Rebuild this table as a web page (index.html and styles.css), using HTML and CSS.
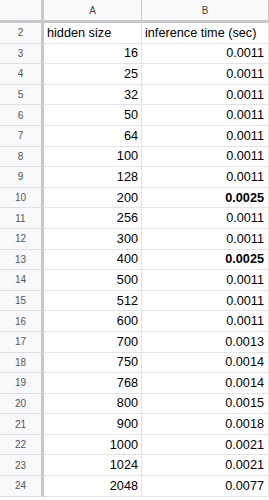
FILE: index.html
```html
<!DOCTYPE html>
<html>
<head>
<meta charset="utf-8">
<link rel="stylesheet" href="styles.css">
</head>
<body>
<div class="sheet">
  <div class="hdr corner"></div><div class="hdr col">A</div><div class="hdr col colb">B</div>
  <div class="rh">2</div><div class="c left">hidden size</div><div class="c left cb">inference time (sec)</div>
  <div class="rh">3</div><div class="c">16</div><div class="c cb">0.0011</div>
  <div class="rh">4</div><div class="c">25</div><div class="c cb">0.0011</div>
  <div class="rh">5</div><div class="c">32</div><div class="c cb">0.0011</div>
  <div class="rh">6</div><div class="c">50</div><div class="c cb">0.0011</div>
  <div class="rh">7</div><div class="c">64</div><div class="c cb">0.0011</div>
  <div class="rh">8</div><div class="c">100</div><div class="c cb">0.0011</div>
  <div class="rh">9</div><div class="c">128</div><div class="c cb">0.0011</div>
  <div class="rh">10</div><div class="c">200</div><div class="c cb bold">0.0025</div>
  <div class="rh">11</div><div class="c">256</div><div class="c cb">0.0011</div>
  <div class="rh">12</div><div class="c">300</div><div class="c cb">0.0011</div>
  <div class="rh">13</div><div class="c">400</div><div class="c cb bold">0.0025</div>
  <div class="rh">14</div><div class="c">500</div><div class="c cb">0.0011</div>
  <div class="rh">15</div><div class="c">512</div><div class="c cb">0.0011</div>
  <div class="rh">16</div><div class="c">600</div><div class="c cb">0.0011</div>
  <div class="rh">17</div><div class="c">700</div><div class="c cb">0.0013</div>
  <div class="rh">18</div><div class="c">750</div><div class="c cb">0.0014</div>
  <div class="rh">19</div><div class="c">768</div><div class="c cb">0.0014</div>
  <div class="rh">20</div><div class="c">800</div><div class="c cb">0.0015</div>
  <div class="rh">21</div><div class="c">900</div><div class="c cb">0.0018</div>
  <div class="rh">22</div><div class="c">1000</div><div class="c cb">0.0021</div>
  <div class="rh">23</div><div class="c">1024</div><div class="c cb">0.0021</div>
  <div class="rh">24</div><div class="c">2048</div><div class="c cb">0.0077</div>
</div>
</body>
</html>
```
FILE: styles.css
```css
html, body {
  margin: 0;
  padding: 0;
  background: #ffffff;
}
.sheet {
  display: grid;
  grid-template-columns: 44px 98px 127px;
  grid-template-rows: 23px;
  grid-auto-rows: 20.6px;
  font-family: "Liberation Sans", Arial, sans-serif;
  width: 269px;
}
.sheet > div {
  box-sizing: border-box;
  display: flex;
  align-items: center;
  white-space: nowrap;
  overflow: hidden;
}
.hdr {
  background: #f8f9fa;
  border-bottom: 3px solid #c6c8ca;
  border-right: 1px solid #c6c8ca;
  justify-content: center;
  font-size: 10px;
  color: #444;
}
.corner {
  border-right: 3px solid #c6c8ca;
}
.rh {
  background: #f8f9fa;
  border-right: 3px solid #c6c8ca;
  border-bottom: 1px solid #dcdedf;
  justify-content: center;
  font-size: 10px;
  color: #555;
}
.c {
  border-right: 1px solid #e2e3e3;
  border-bottom: 1px solid #e2e3e3;
  justify-content: flex-end;
  padding: 0 3px 0 3px;
  font-size: 12.7px;
  color: #000;
}
.cb {
  padding-right: 4px;
}
.c.left {
  justify-content: flex-start;
}
.bold {
  font-weight: bold;
}
```
